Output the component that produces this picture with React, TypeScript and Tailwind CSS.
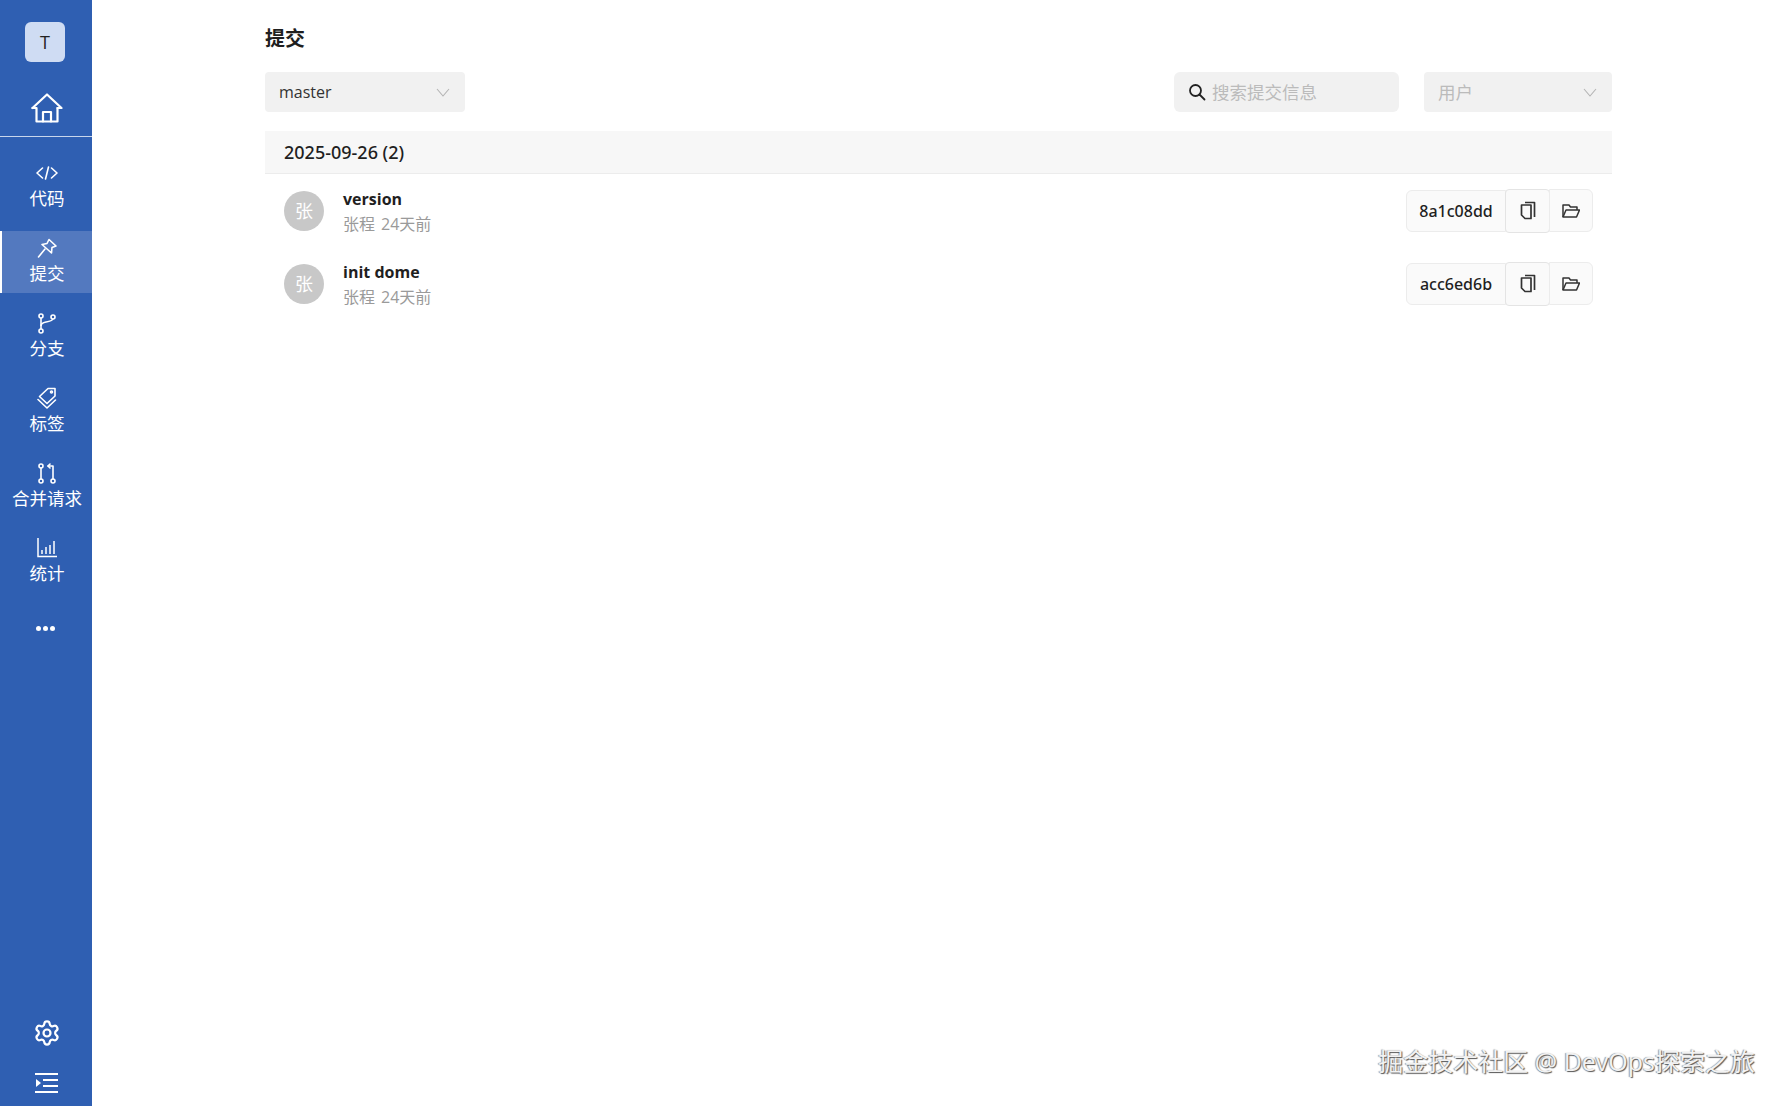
import React from "react";
import { Settings } from "lucide-react";

const font = "[font-family:'Open_Sans','Noto_Sans_CJK_SC',sans-serif]";

const HomeIcon = () => (
  <svg width="32" height="30" viewBox="0 0 32 30" fill="none" stroke="currentColor" strokeWidth="2.2" strokeLinejoin="round" strokeLinecap="round">
    <path d="M1.500 15 16 1.500 30.500 15h-4" />
    <path d="M1.500 15h4v13.500h21V15" />
    <path d="M12 28.500V19h8v9.500" />
  </svg>
);

const CodeIcon = () => (
  <svg width="22" height="14" viewBox="0 0 22 14" fill="none" stroke="currentColor" strokeWidth="1.6" strokeLinecap="round" strokeLinejoin="round">
    <path d="M6.500 2 1 7l5.500 5" />
    <path d="M15.500 2 21 7l-5.500 5" />
    <path d="M12.500 1 9.500 13" />
  </svg>
);

const PinIcon = () => (
  <svg width="20" height="21" viewBox="0 0 20 21" fill="none" stroke="currentColor" strokeWidth="1.6" strokeLinecap="round" strokeLinejoin="round">
    <path d="M12 1.500 19 8 15 9.500 14.500 15 5 6.500 10 5.500z" />
    <path d="M8 11 1.500 19" />
  </svg>
);

const BranchIcon = () => (
  <svg width="18" height="21" viewBox="0 0 18 21" fill="none" stroke="currentColor" strokeWidth="1.6">
    <circle cx="3" cy="3" r="2" />
    <circle cx="3" cy="18" r="2" />
    <circle cx="15" cy="4" r="2" />
    <path d="M3 5v11" />
    <path d="M3 13c0-3 2-3.500 5-4 3.500-.6 6-1 7-3" />
  </svg>
);

const TagIcon = () => (
  <svg width="20" height="22" viewBox="0 0 20 22" fill="none" stroke="currentColor" strokeWidth="1.6" strokeLinejoin="round" strokeLinecap="round">
    <path d="M11 1.500h7v7.500l-8 7.500-7.500-7z" />
    <path d="M1 12.500 10 21l8.500-8" />
    <circle cx="14.500" cy="5" r="1" />
  </svg>
);

const MergeIcon = () => (
  <svg width="18" height="21" viewBox="0 0 18 21" fill="none" stroke="currentColor" strokeWidth="1.6" strokeLinecap="round" strokeLinejoin="round">
    <circle cx="3" cy="3" r="2" />
    <circle cx="3" cy="18" r="2" />
    <circle cx="15" cy="18" r="2" />
    <path d="M3 5v11" />
    <path d="M15 16V3H10" />
    <path d="M12 1 10 3l2 2" />
  </svg>
);

const ChartIcon = () => (
  <svg width="20" height="20" viewBox="0 0 20 20" fill="none" stroke="currentColor" strokeWidth="1.500">
    <path d="M1 0v18.500h19" />
    <path d="M5 16v-4M9 16V9M13 16V7M17 16V3" />
  </svg>
);

const IndentIcon = () => (
  <svg width="24" height="20" viewBox="0 0 24 20" fill="currentColor">
    <rect x="0" y="0" width="23" height="2" />
    <rect x="8" y="6" width="15" height="2" />
    <rect x="8" y="12" width="15" height="2" />
    <rect x="0" y="18" width="23" height="2" />
    <path d="M1 6l5 4-5 4z" />
  </svg>
);

const Chevron = () => (
  <svg width="14" height="9" viewBox="0 0 14 9" fill="none" stroke="#b4b4b4" strokeWidth="1.100">
    <path d="M1 1l6 7 6-7" />
  </svg>
);

const SearchIcon = () => (
  <svg width="18" height="18" viewBox="0 0 18 18" fill="none" stroke="#222" strokeWidth="1.800" strokeLinecap="round">
    <circle cx="7.500" cy="7.500" r="5.500" />
    <path d="M11.500 11.500 16.500 16.500" />
  </svg>
);

const CopyIcon = () => (
  <svg width="16" height="19" viewBox="0 0 16 19" fill="none" stroke="#333" strokeWidth="1.700" strokeLinejoin="round">
    <path d="M5 1.500h9.500V16" />
    <path d="M1.500 4h9.500v13.500H5l-3.500-3.500z" />
  </svg>
);

const FolderIcon = () => (
  <svg width="18" height="14" viewBox="0 0 18 14" fill="none" stroke="#333" strokeWidth="1.500" strokeLinejoin="round">
    <path d="M1 13V1h6l1.500 2H15v3" />
    <path d="M1 13 4 6h13.500L14.500 13z" />
  </svg>
);

const navItems = [
  { label: "代码", icon: <CodeIcon /> },
  { label: "提交", icon: <PinIcon />, active: true },
  { label: "分支", icon: <BranchIcon /> },
  { label: "标签", icon: <TagIcon /> },
  { label: "合并请求", icon: <MergeIcon /> },
  { label: "统计", icon: <ChartIcon /> },
];

const commits = [
  { title: "version", sha: "8a1c08dd" },
  { title: "init dome", sha: "acc6ed6b" },
];

export default function App() {
  return (
    <div className={`flex h-[1106px] w-full overflow-hidden bg-white text-[#1f1f1f] ${font}`}>
      <aside className="flex w-[92px] shrink-0 flex-col bg-[#2f5fb2] text-white">
        <div className="flex h-[137px] flex-col items-center border-b border-[#c9d6ec] pt-[22px]">
          <div className="mr-[2px] flex h-10 w-10 items-center justify-center rounded-md bg-[#cfdcf3] text-lg text-[#222]">T</div>
          <div className="ml-[2px] mt-[31px]">
            <HomeIcon />
          </div>
        </div>
        <nav className="mt-[19px] flex flex-col gap-[13px]">
          {navItems.map((item) => (
            <div
              key={item.label}
              className={
                item.active
                  ? "flex h-[62px] flex-col items-center justify-center border-l-2 border-white bg-[#5379bf] pb-[2px]"
                  : "flex h-[62px] flex-col items-center justify-center pb-[2px] pl-[2px]"
              }
            >
              <div className="flex h-[23px] items-center justify-center pb-[2px]">{item.icon}</div>
              <div className="text-[17.500px] leading-[24px] whitespace-nowrap">{item.label}</div>
            </div>
          ))}
        </nav>
        <div className="mt-[33px] flex justify-center gap-[2px] pr-[2px]">
          <span className="h-[5px] w-[5px] rounded-full bg-white" />
          <span className="h-[5px] w-[5px] rounded-full bg-white" />
          <span className="h-[5px] w-[5px] rounded-full bg-white" />
        </div>
        <div className="mt-auto flex flex-col items-center gap-[26px] pb-[13px] pl-[2px]">
          <Settings size={28} strokeWidth={1.900} />
          <IndentIcon />
        </div>
      </aside>

      <main className="relative flex-1 pl-[173px] pr-[172px]">
        <h1 className="pt-[25px] text-[20px] font-bold leading-[27px]">提交</h1>
        <div className="mt-[20px] flex items-center">
          <div className="flex h-10 w-[200px] items-center justify-between rounded-sm bg-[#f1f1f1] pl-[14px] pr-[15px] text-base text-[#333]">
            <span>master</span>
            <Chevron />
          </div>
          <div className="ml-auto flex h-10 w-[225px] items-center gap-[6px] rounded-md bg-[#f1f1f1] pl-[14px] text-[17.500px] text-[#bbbbbb]">
            <SearchIcon />
            <span>搜索提交信息</span>
          </div>
          <div className="ml-[25px] flex h-10 w-[188px] items-center justify-between rounded-sm bg-[#f1f1f1] pl-[14px] pr-[15px] text-[17.500px] text-[#bbbbbb]">
            <span>用户</span>
            <Chevron />
          </div>
        </div>
        <div className="mt-[19px] flex h-[43px] items-center border-b border-[#ececec] bg-[#f7f7f7] pl-[19px] text-[18px] font-medium [font-family:'Noto_Sans','Noto_Sans_CJK_SC',sans-serif]">
          2025-09-26 (2)
        </div>
        <div className="flex flex-col">
          {commits.map((c) => (
            <div key={c.sha} className="flex h-[73px] items-center pl-[19px] pr-[19px]">
              <div className="flex h-10 w-10 items-center justify-center rounded-full bg-[#c8c8c8] text-lg text-white">张</div>
              <div className="ml-[19px] flex flex-col">
                <div className="text-base font-bold leading-[26px]">{c.title}</div>
                <div className="flex gap-[6px] text-base leading-[24px] text-[#9a9a9a]">
                  <span>张程</span>
                  <span>24天前</span>
                </div>
              </div>
              <div className="ml-auto flex h-[43px] items-center text-base font-medium [font-family:'Noto_Sans',sans-serif]">
                <div className="flex h-[42px] w-[100px] items-center justify-center rounded-l-md border border-[#ececec] bg-[#fafafa]">{c.sha}</div>
                <div className="-ml-px flex h-[44px] w-[45px] items-center justify-center rounded-sm border border-[#e4e4e4] bg-[#fafafa]">
                  <CopyIcon />
                </div>
                <div className="-ml-px flex h-[43px] w-[44px] items-center justify-center rounded-r-md border border-[#ececec] bg-[#fafafa]">
                  <FolderIcon />
                </div>
              </div>
            </div>
          ))}
        </div>
        <div className="absolute bottom-[29px] right-[29px] text-[25px] leading-[32px] whitespace-nowrap text-[#f2f2f2] [text-shadow:1px_1px_1px_#555,-1px_0_1px_#999]">
          掘金技术社区 @ DevOps探索之旅
        </div>
      </main>
    </div>
  );
}
